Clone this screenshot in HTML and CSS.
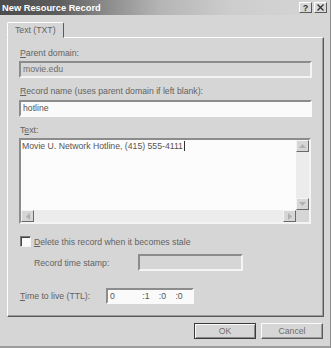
FILE: index.html
```html
<!DOCTYPE html>
<html lang="en">
<head>
    <meta charset="UTF-8">
    <title>New Resource Record</title>
    <link rel="stylesheet" href="styles.css">
</head>
<body>
    <div class="dialog">
        <div class="titlebar">
            <span class="title">New Resource Record</span>
            <div class="caption-btns">
                <span class="cbtn">?</span>
                <span class="cbtn">
                    <svg width="9" height="7" viewBox="0 0 9 7"><path d="M1.5 0.5 L7.5 6.5 M7.5 0.5 L1.5 6.5" stroke="#333" stroke-width="1.4"/></svg>
                </span>
            </div>
        </div>
        <div class="content">
            <div class="tabs">
                <div class="tab">Text (TXT)</div>
            </div>
            <div class="panel">
                <div class="lbl"><u>P</u>arent domain:</div>
                <div class="field disabled mt2">movie.edu</div>

                <div class="lbl mt7"><u>R</u>ecord name (uses parent domain if left blank):</div>
                <div class="field mt3">hotline</div>

                <div class="lbl mt7">T<u>e</u>xt:</div>
                <div class="memo">
                    <div class="memo-text">Movie U. Network Hotline, (415) 555-4111<span class="caret"></span></div>
                    <div class="vscroll">
                        <span class="sbtn"><svg width="7" height="4" viewBox="0 0 7 4"><path d="M0 4 L3.5 0 L7 4 Z" fill="#b0b0b0"/></svg></span>
                        <span class="sbtn"><svg width="7" height="4" viewBox="0 0 7 4"><path d="M0 0 L3.5 4 L7 0 Z" fill="#b0b0b0"/></svg></span>
                    </div>
                    <div class="hscroll">
                        <span class="sbtn"><svg width="4" height="7" viewBox="0 0 4 7"><path d="M4 0 L0 3.5 L4 7 Z" fill="#b0b0b0"/></svg></span>
                        <span class="sbtn"><svg width="4" height="7" viewBox="0 0 4 7"><path d="M0 0 L4 3.5 L0 7 Z" fill="#b0b0b0"/></svg></span>
                    </div>
                    <div class="corner"></div>
                </div>

                <div class="check-row">
                    <span class="checkbox"></span>
                    <span><u>D</u>elete this record when it becomes stale</span>
                </div>

                <div class="stamp-row">
                    <span class="stamp-lbl">Record time stamp:</span>
                    <div class="field disabled stamp-field"></div>
                </div>

                <div class="ttl-row">
                    <span class="ttl-lbl"><u>T</u>ime to live (TTL):</span>
                    <div class="field ttl-field">
                        <span class="ttl-days">0</span>
                        <span class="ttl-part">:1</span>
                        <span class="ttl-part">:0</span>
                        <span class="ttl-part">:0</span>
                    </div>
                </div>
            </div>
            <div class="buttons">
                <span class="btn default">OK</span>
                <span class="btn">Cancel</span>
            </div>
        </div>
    </div>
</body>
</html>
```

FILE: styles.css
```css
*{
    margin: 0;
    padding: 0;
    box-sizing: border-box;
}
body{
    width: 331px;
    height: 348px;
    overflow: hidden;
    background-color: #d6d6d6;
    font-family: "Liberation Sans", Arial, sans-serif;
    font-size: 8.7px;
    color: #636363;
}
u{
    text-decoration: underline;
}
.dialog{
    width: 331px;
    height: 348px;
    background-color: #d6d6d6;
    border-right: 1px solid #8c8c8c;
    border-bottom: 2px solid #9c9c9c;
}
.titlebar{
    height: 15px;
    display: flex;
    align-items: center;
    justify-content: space-between;
    padding: 0 3px 0 2px;
    background: linear-gradient(to right, #4c4c4c 0%, #5e5e5e 18%, #8a8a8a 32%, #b4b4b4 48%, #cdcdcd 70%, #d6d6d6 100%);
}
.title{
    color: #fff;
    font-weight: bold;
    font-size: 9.3px;
}
.caption-btns{
    display: flex;
    gap: 2px;
}
.cbtn{
    width: 13px;
    height: 11px;
    display: flex;
    align-items: center;
    justify-content: center;
    background-color: #d8d8d8;
    border: 1px solid;
    border-color: #fff #5a5a5a #5a5a5a #fff;
    font-size: 9px;
    font-weight: bold;
    color: #333;
}
.content{
    padding: 7px 6px 0 7px;
}
.tabs{
    display: flex;
    height: 15px;
}
.tab{
    height: 16px;
    padding: 0 7px 0 7px;
    line-height: 15px;
    background-color: #d6d6d6;
    border: 1px solid;
    border-color: #fff #5a5a5a #d6d6d6 #fff;
    border-radius: 2px 2px 0 0;
    position: relative;
    z-index: 1;
}
.panel{
    height: 280px;
    padding: 9px 11px 0 11px;
    border: 1px solid;
    border-color: #fff #5a5a5a #5a5a5a #fff;
    box-shadow: inset -1px -1px 0 #9c9c9c;
}
.lbl{
    height: 12px;
    line-height: 12px;
    padding-left: 1px;
}
.mt2{ margin-top: 2px; }
.mt3{ margin-top: 3px; }
.mt7{ margin-top: 7px; }
.field{
    height: 17px;
    line-height: 13px;
    padding-left: 2px;
    background-color: #fafafa;
    border: 2px solid;
    border-color: #8c8c8c #fafafa #fafafa #8c8c8c;
    color: #555;
}
.field.disabled{
    background-color: #d6d6d6;
    border-color: #8c8c8c #f4f4f4 #f4f4f4 #8c8c8c;
    color: #6e6e6e;
}
.memo{
    margin-top: 2px;
    height: 86px;
    margin-right: 1px;
    border: 2px solid;
    border-color: #8c8c8c #f4f4f4 #f4f4f4 #8c8c8c;
    background-color: #fcfcfc;
    display: grid;
    grid-template-columns: 1fr 13px;
    grid-template-rows: 1fr 12px;
}
.memo-text{
    padding-left: 1px;
    line-height: 12px;
    color: #555;
}
.caret{
    display: inline-block;
    width: 1px;
    height: 10px;
    margin-left: 1px;
    vertical-align: -2px;
    background-color: #333;
}
.vscroll{
    background-color: #ececec;
    display: flex;
    flex-direction: column;
    justify-content: space-between;
}
.hscroll{
    background-color: #ececec;
    display: flex;
    justify-content: space-between;
}
.corner{
    background-color: #d6d6d6;
}
.sbtn{
    width: 13px;
    height: 12px;
    display: flex;
    align-items: center;
    justify-content: center;
    background-color: #d6d6d6;
    border: 1px solid;
    border-color: #f4f4f4 #6a6a6a #6a6a6a #f4f4f4;
}
.check-row{
    margin-top: 11px;
    height: 13px;
    display: flex;
    align-items: center;
    gap: 3px;
    padding-left: 1px;
}
.checkbox{
    width: 11px;
    height: 11px;
    background-color: #fafafa;
    border: 1px solid;
    border-color: #7a7a7a #f4f4f4 #f4f4f4 #7a7a7a;
    box-shadow: inset 1px 1px 0 #444;
}
.stamp-row{
    margin-top: 6px;
    display: flex;
    align-items: center;
}
.stamp-lbl{
    width: 119px;
    padding-left: 15px;
}
.stamp-field{
    width: 105px;
}
.ttl-row{
    margin-top: 17px;
    display: flex;
    align-items: center;
}
.ttl-lbl{
    width: 87px;
    padding-left: 1px;
}
.ttl-field{
    width: 88px;
    height: 16px;
    display: flex;
    line-height: 12px;
}
.ttl-days{
    width: 33px;
}
.ttl-part{
    width: 17px;
}
.buttons{
    margin-top: 6px;
    display: flex;
    justify-content: flex-end;
    gap: 5px;
    padding-right: 1px;
}
.btn{
    width: 62px;
    height: 16px;
    display: flex;
    align-items: center;
    justify-content: center;
    background-color: #d6d6d6;
    border: 1px solid;
    border-color: #fafafa #5a5a5a #5a5a5a #fafafa;
    box-shadow: inset -1px -1px 0 #9c9c9c;
    color: #6e6e6e;
}
.btn.default{
    border-color: #3a3a3a;
    box-shadow: inset 1px 1px 0 #fafafa, inset -1px -1px 0 #8c8c8c;
}
```
